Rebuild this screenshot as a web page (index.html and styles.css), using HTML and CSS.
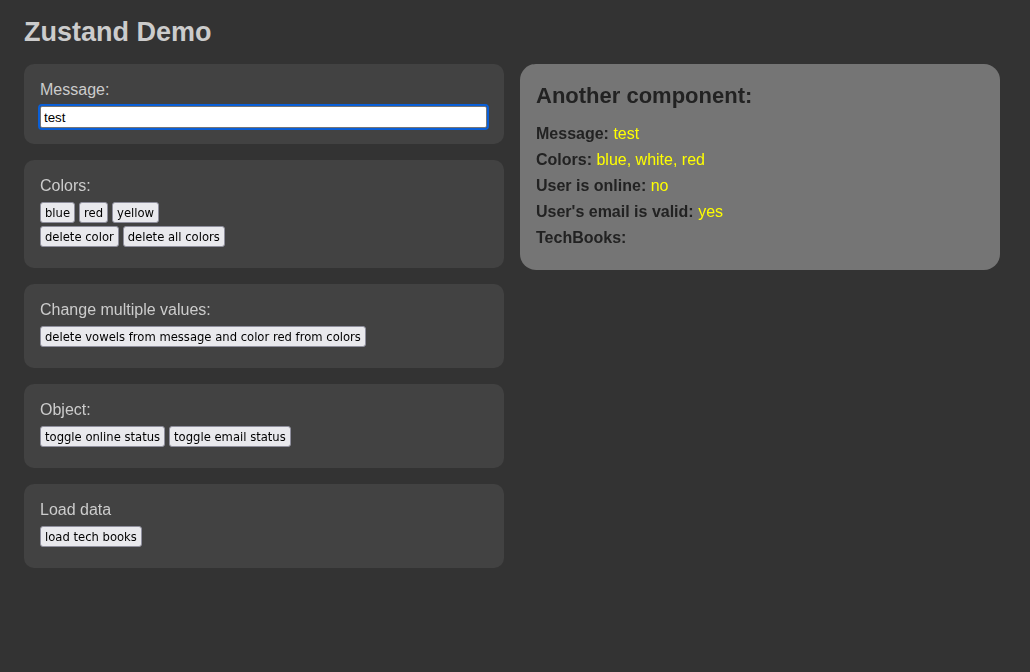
FILE: index.html
```html
<!DOCTYPE html>
<html>
<head>
<meta charset="utf-8">
<link rel="stylesheet" href="styles.css">
</head>
<body>
<h1 class="title">Zustand Demo</h1>
<div class="layout">
  <div class="left">
    <div class="card">
      <div class="label">Message:</div>
      <input class="text-input" type="text" value="test" autofocus>
    </div>
    <div class="card card-btns">
      <div class="label">Colors:</div>
      <div class="btn-row">
        <button class="btn">blue</button>
        <button class="btn">red</button>
        <button class="btn">yellow</button>
      </div>
      <div class="btn-row">
        <button class="btn">delete color</button>
        <button class="btn">delete all colors</button>
      </div>
    </div>
    <div class="card card-btns">
      <div class="label">Change multiple values:</div>
      <div class="btn-row">
        <button class="btn">delete vowels from message and color red from colors</button>
      </div>
    </div>
    <div class="card card-btns">
      <div class="label">Object:</div>
      <div class="btn-row">
        <button class="btn">toggle online status</button>
        <button class="btn">toggle email status</button>
      </div>
    </div>
    <div class="card card-btns">
      <div class="label">Load data</div>
      <div class="btn-row">
        <button class="btn">load tech books</button>
      </div>
    </div>
  </div>
  <div class="right">
    <div class="info-card">
      <h2 class="info-title">Another component:</h2>
      <p class="info-line"><b>Message:</b> <span class="val">test</span></p>
      <p class="info-line"><b>Colors:</b> <span class="val">blue, white, red</span></p>
      <p class="info-line"><b>User is online:</b> <span class="val">no</span></p>
      <p class="info-line"><b>User's email is valid:</b> <span class="val">yes</span></p>
      <p class="info-line"><b>TechBooks:</b></p>
    </div>
  </div>
</div>
</body>
</html>
```
FILE: styles.css
```css
html, body {
  margin: 0;
  padding: 0;
}
body {
  background: #333333;
  font-family: "Liberation Sans", Arial, sans-serif;
  color: #cccccc;
  padding: 16px 24px;
}
.title {
  margin: 0 0 16px 0;
  font-size: 27px;
  line-height: 32px;
  font-weight: bold;
  color: #cccccc;
}
.layout {
  display: flex;
  gap: 16px;
  align-items: flex-start;
}
.left {
  width: 480px;
  display: flex;
  flex-direction: column;
  gap: 16px;
}
.right {
  width: 480px;
}
.card {
  background: #424242;
  border-radius: 10px;
  padding: 16px;
  display: flex;
  flex-direction: column;
}
.card-btns {
  padding-bottom: 21px;
}
.label {
  font-size: 16px;
  line-height: 20px;
  color: #cccccc;
  margin-bottom: 6px;
}
.text-input {
  box-sizing: border-box;
  width: 447px;
  height: 22px;
  margin: 0;
  padding: 1px 3px;
  font-family: "Liberation Sans", Arial, sans-serif;
  font-size: 13.33px;
  color: #000;
  background: #fff;
  border: 1px solid #767676;
  border-radius: 2px;
  outline: 2px solid #0a5fd7;
  outline-offset: 0;
}
.btn-row {
  display: flex;
  gap: 4px;
}
.btn-row + .btn-row {
  margin-top: 3px;
}
.btn {
  margin: 0;
  height: 21px;
  padding: 0 4px;
  font-family: "DejaVu Sans", Verdana, sans-serif;
  font-size: 11.6px;
  color: #000;
  background: #e9e9ed;
  border: 1px solid #8f8f9d;
  border-radius: 3px;
}
.info-card {
  background: #757575;
  border-radius: 16px;
  padding: 17px 16px 19px;
  color: #222222;
}
.info-title {
  margin: 0 0 10px 0;
  font-size: 22px;
  line-height: 30px;
  font-weight: bold;
  color: #222222;
}
.info-line {
  margin: 0;
  font-size: 16px;
  line-height: 26px;
}
.info-line b {
  color: #222222;
}
.val {
  color: #ffff00;
}
```
